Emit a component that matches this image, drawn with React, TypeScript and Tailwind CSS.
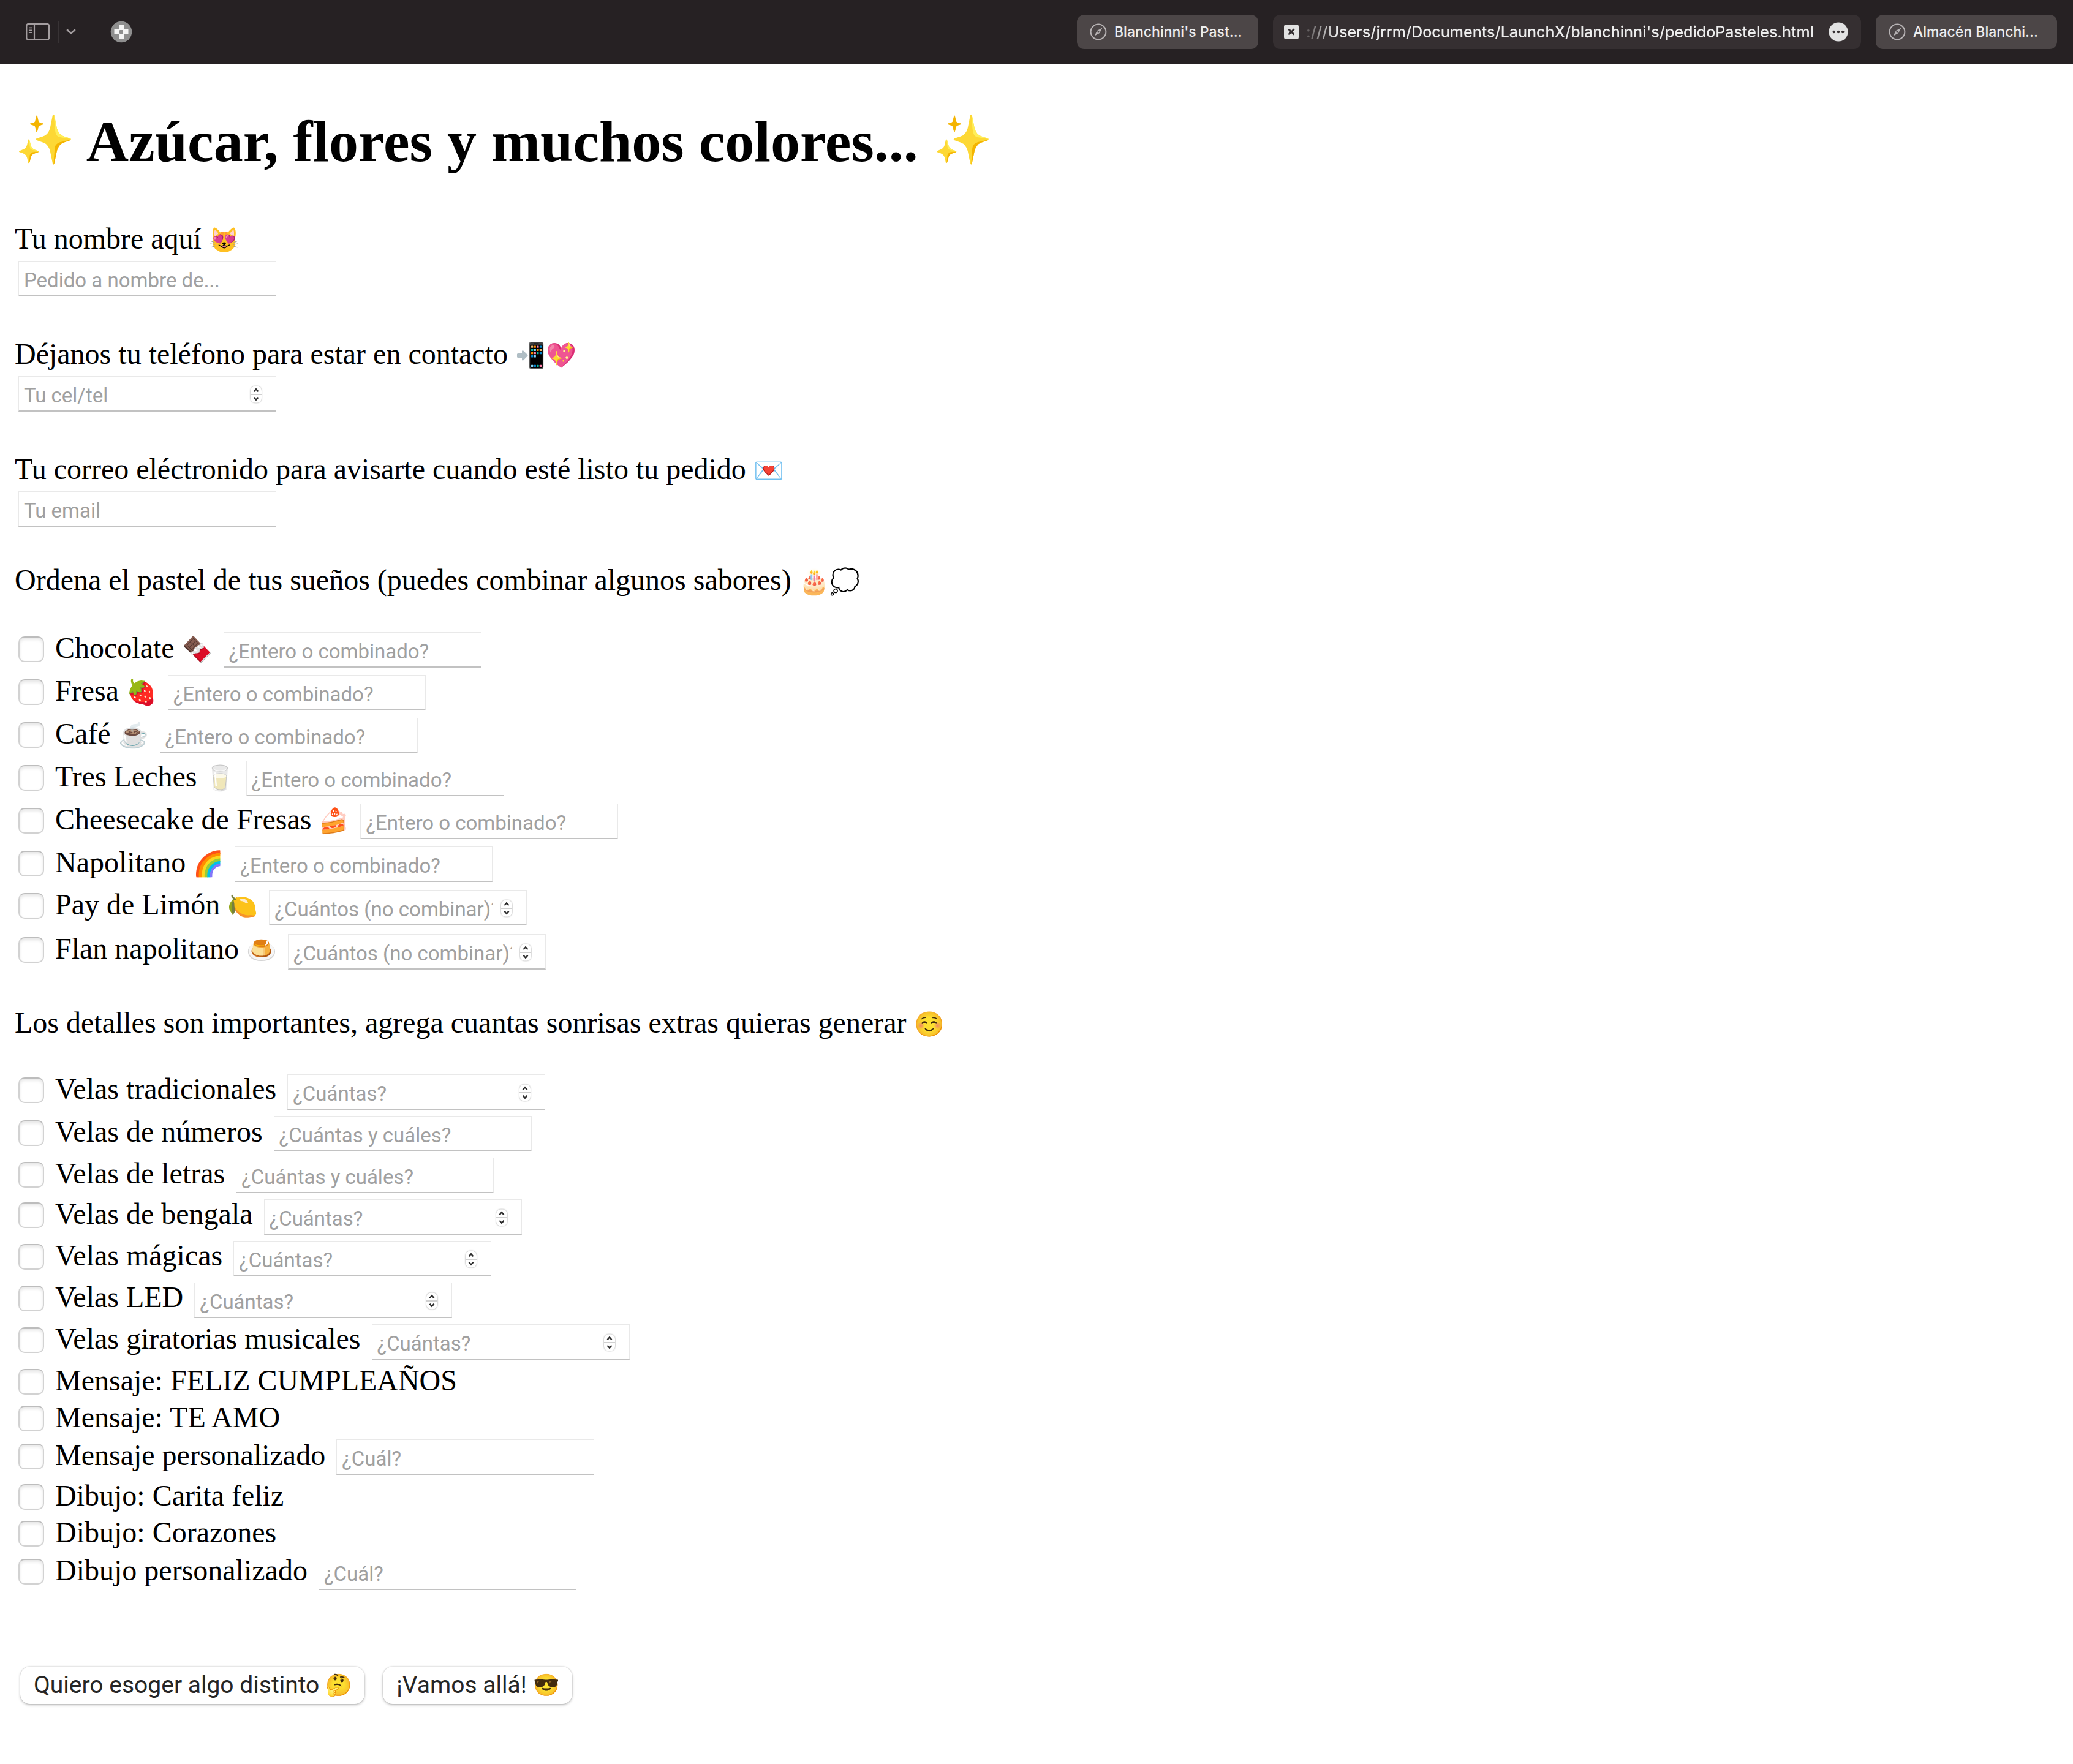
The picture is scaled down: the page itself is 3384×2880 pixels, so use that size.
import React, { useId } from "react";

const chrome = "font-['Inter','Liberation_Sans',sans-serif]";
const control = "font-['Roboto','Liberation_Sans',sans-serif]";

function Emoji({ children }: { children: string }) {
  return (
    <span className="inline-flex w-[50px] justify-center text-[40px] leading-none">{children}</span>
  );
}

function TitleEmoji({ children }: { children: string }) {
  return (
    <span className="inline-flex w-[98px] justify-center align-[8px] text-[78px] leading-none">{children}</span>
  );
}

function Compass() {
  return (
    <svg viewBox="0 0 28 28" className="size-7 shrink-0" fill="none" aria-hidden="true">
      <circle cx="14" cy="14" r="12.4" stroke="#b7b3b4" strokeWidth="2" />
      <path fillRule="evenodd" d="M20.6 7.2 16 15.9 7.4 20.8 12 12.1Z M14 12.4a1.6 1.6 0 1 0 0 3.2 1.6 1.6 0 0 0 0-3.2Z" fill="#b7b3b4" />
    </svg>
  );
}

function Tab({ title }: { title: string }) {
  return (
    <button type="button" className="flex h-14 w-[296px] items-center gap-3 rounded-xl bg-[#4c4647] pl-[21px] text-left text-[23px] font-medium text-[#ececec]">
      <Compass />
      <span className="whitespace-nowrap">{title}</span>
    </button>
  );
}

function Toolbar() {
  return (
    <header className={`flex h-[105px] items-center justify-between border-b border-black bg-[#262123] pr-[26px] pl-[42px] ${chrome}`}>
      <div className="flex items-center">
        <button type="button" aria-label="Barra lateral">
          <svg viewBox="0 0 40 30" className="h-[30px] w-10" fill="none" stroke="#a39d9f" aria-hidden="true">
            <rect x="1.2" y="1.9" width="37" height="26" rx="3.5" strokeWidth="2.4" />
            <path d="M14 2v26" strokeWidth="2.2" />
            <path d="M5.6 8.4h4.6M5.6 12.3h4.6M5.6 16.3h4.6" strokeWidth="1.6" strokeLinecap="round" />
          </svg>
        </button>
        <span className="ml-[13px] h-9 w-0.5 bg-[#383335]" />
        <button type="button" aria-label="Grupos de pestañas" className="ml-[11px]">
          <svg viewBox="0 0 16 10" className="h-2.5 w-4" fill="none" stroke="#a39d9f" strokeWidth="2.8" strokeLinecap="round" strokeLinejoin="round" aria-hidden="true">
            <path d="M2 2.2 8 7.2 14 2.2" />
          </svg>
        </button>
        <button type="button" aria-label="Extensión" className="ml-14">
          <svg viewBox="0 0 36 36" className="size-9" aria-hidden="true">
            <circle cx="18" cy="18" r="17.3" fill="#8f8f8f" />
            <path d="M14 6.5h8V14h7.5v8H22v7.5h-8V22H6.500v-8H14Z" fill="#f5f5f5" />
            <rect x="15" y="15" width="6" height="6" rx="1" fill="#8f8f8f" />
          </svg>
        </button>
      </div>
      <div className="flex items-center gap-6">
        <Tab title="Blanchinni's Past..." />
        <div className="flex h-14 w-[960px] items-center justify-between rounded-xl bg-[#352f31] pr-[21px] pl-[18px]">
          <button type="button" aria-label="Cerrar pestaña">
            <svg viewBox="0 0 24 24" className="size-6" aria-hidden="true">
              <rect width="24" height="24" rx="3.5" fill="#e2e2e2" />
              <path d="m7.500 7.500 9 9m0-9-9 9" stroke="#352f31" strokeWidth="3" />
            </svg>
          </button>
          <span className="ml-auto text-[25px] font-medium whitespace-nowrap text-[#ececec] [mask-image:linear-gradient(to_right,rgba(0,0,0,0.2),black_50px)]">
            :///Users/jrrm/Documents/LaunchX/blanchinni's/pedidoPasteles.html
          </span>
          <button type="button" aria-label="Más opciones" className="ml-6">
            <svg viewBox="0 0 32 32" className="size-8" aria-hidden="true">
              <circle cx="16" cy="16" r="15.6" fill="#e2e2e2" />
              <g fill="#352f31">
                <circle cx="8.800" cy="16" r="2.300" />
                <circle cx="16" cy="16" r="2.300" />
                <circle cx="23.200" cy="16" r="2.300" />
              </g>
            </svg>
          </button>
        </div>
        <Tab title="Almacén Blanchi..." />
      </div>
    </header>
  );
}

function Stepper() {
  return (
    <svg viewBox="0 0 24 34" className="pointer-events-none absolute top-3.5 right-[21px] h-[34px] w-6 drop-shadow-[0_0_1px_rgba(0,0,0,0.4)]" fill="none" aria-hidden="true">
      <rect x="3" y="2.500" width="18" height="27" rx="7.500" fill="#fff" />
      <path d="M3 16h18" stroke="#d0d0d0" strokeWidth="2" />
      <path d="m8.500 11.300 3.500-4 3.500 4M8.500 20.700l3.500 4 3.500-4" stroke="#2a2a2a" strokeWidth="2.400" />
    </svg>
  );
}

type FieldProps = { placeholder: string; kind?: "text" | "number" | "email"; id?: string; label?: string };

function Field({ placeholder, kind = "text", id, label }: FieldProps) {
  return (
    <span className={`relative block w-[421px] ${control}`}>
      <input
        id={id}
        type={kind}
        aria-label={label}
        placeholder={placeholder}
        className={
          "block h-[58px] w-full border border-b-2 border-[#e9e9e9] border-b-[#c2c2c2] bg-white pt-1.5 pl-2 text-[33px] text-black [appearance:textfield] placeholder:text-[#a0a0a0] " +
          (kind === "number" ? "pr-[54px] [&::-webkit-inner-spin-button]:hidden" : "pr-2")
        }
      />
      {kind === "number" && <Stepper />}
    </span>
  );
}

function Question({ children, ...field }: FieldProps & { children: React.ReactNode }) {
  const id = useId();
  return (
    <div>
      <label htmlFor={id} className="block leading-[72px]">{children}</label>
      <div className="px-1.5">
        <Field id={id} {...field} />
      </div>
    </div>
  );
}

type Item = { name: string; emoji?: string; hint?: string; kind?: "text" | "number" };

function Option({ name, emoji, hint, kind = "text" }: Item) {
  const id = useId();
  const number = kind === "number";
  const pad = !hint ? "min-h-15 py-[3px]" : emoji ? (number ? "py-[7px]" : "py-1.5") : "py-[5px]";
  return (
    <li className={`flex items-start ${pad}`}>
      <input
        id={id}
        type="checkbox"
        className={
          "ml-1.5 size-[42px] shrink-0 appearance-none rounded-[10px] border-2 border-[#d2d2d2] border-t-[#bdbdbd] bg-white shadow-[inset_0_3px_5px_rgba(0,0,0,0.1)] checked:bg-blue-500 " +
          (number ? "mt-[5px]" : "mt-[7px]")
        }
      />
      <label htmlFor={id} className={`ml-[18px] whitespace-nowrap ${number ? "leading-[48px]" : "leading-[52px]"}`}>
        {name}
        {emoji && <> <Emoji>{emoji}</Emoji></>}
      </label>
      {hint && (
        <div className="ml-[18px]">
          <Field placeholder={hint} kind={kind} label={`${name}: ${hint}`} />
        </div>
      )}
    </li>
  );
}

const cakes: Item[] = [
  { name: "Chocolate", emoji: "🍫", hint: "¿Entero o combinado?" },
  { name: "Fresa", emoji: "🍓", hint: "¿Entero o combinado?" },
  { name: "Café", emoji: "☕️", hint: "¿Entero o combinado?" },
  { name: "Tres Leches", emoji: "🥛", hint: "¿Entero o combinado?" },
  { name: "Cheesecake de Fresas", emoji: "🍰", hint: "¿Entero o combinado?" },
  { name: "Napolitano", emoji: "🌈", hint: "¿Entero o combinado?" },
  { name: "Pay de Limón", emoji: "🍋", hint: "¿Cuántos (no combinar)?", kind: "number" },
  { name: "Flan napolitano", emoji: "🍮", hint: "¿Cuántos (no combinar)?", kind: "number" },
];

const extras: Item[] = [
  { name: "Velas tradicionales", hint: "¿Cuántas?", kind: "number" },
  { name: "Velas de números", hint: "¿Cuántas y cuáles?" },
  { name: "Velas de letras", hint: "¿Cuántas y cuáles?" },
  { name: "Velas de bengala", hint: "¿Cuántas?", kind: "number" },
  { name: "Velas mágicas", hint: "¿Cuántas?", kind: "number" },
  { name: "Velas LED", hint: "¿Cuántas?", kind: "number" },
  { name: "Velas giratorias musicales", hint: "¿Cuántas?", kind: "number" },
  { name: "Mensaje: FELIZ CUMPLEAÑOS" },
  { name: "Mensaje: TE AMO" },
  { name: "Mensaje personalizado", hint: "¿Cuál?" },
  { name: "Dibujo: Carita feliz" },
  { name: "Dibujo: Corazones" },
  { name: "Dibujo personalizado", hint: "¿Cuál?" },
];

function Action({ children, emoji, type }: { children: React.ReactNode; emoji: string; type: "reset" | "submit" }) {
  return (
    <button
      type={type}
      className={`flex h-[61px] items-center gap-2.5 rounded-2xl bg-white pr-5 pl-[22px] text-[39px] whitespace-nowrap text-[#262626] shadow-[0_0_2px_rgba(0,0,0,0.25),0_2px_4px_rgba(0,0,0,0.22)] ${control}`}
    >
      {children}
      <span className="text-[35px] leading-none">{emoji}</span>
    </button>
  );
}

export default function App() {
  return (
    <div className="min-h-screen bg-white font-['Liberation_Serif',serif] text-5xl text-black">
      <Toolbar />
      <main className="px-6 pt-[70px]">
        <h1 className="text-[96px] leading-[112px] font-bold">
          <TitleEmoji>✨</TitleEmoji> Azúcar, flores y muchos colores... <TitleEmoji>✨</TitleEmoji>
        </h1>
        <form className="pt-[67px]" onSubmit={(e) => e.preventDefault()}>
          <div className="flex flex-col gap-[58px]">
            <Question placeholder="Pedido a nombre de...">
              Tu nombre aquí <Emoji>😻</Emoji>
            </Question>
            <Question placeholder="Tu cel/tel" kind="number">
              Déjanos tu teléfono para estar en contacto <Emoji>📲</Emoji><Emoji>💖</Emoji>
            </Question>
            <Question placeholder="Tu email" kind="email">
              Tu correo eléctronido para avisarte cuando esté listo tu pedido <Emoji>💌</Emoji>
            </Question>
          </div>
          <p className="mt-[51px] leading-[72px]">
            Ordena el pastel de tus sueños (puedes combinar algunos sabores) <Emoji>🎂</Emoji><Emoji>💭</Emoji>
          </p>
          <ul className="mt-[43px]">
            {cakes.map((item) => (
              <Option key={item.name} {...item} />
            ))}
          </ul>
          <p className="mt-11 leading-[72px]">
            Los detalles son importantes, agrega cuantas sonrisas extras quieras generar <Emoji>☺️</Emoji>
          </p>
          <ul className="mt-[43px]">
            {extras.map((item) => (
              <Option key={item.name} {...item} />
            ))}
          </ul>
          <div className="mt-[120px] flex gap-[30px] pl-[9px]">
            <Action type="reset" emoji="🤔">Quiero esoger algo distinto</Action>
            <Action type="submit" emoji="😎">¡Vamos allá!</Action>
          </div>
        </form>
      </main>
    </div>
  );
}
